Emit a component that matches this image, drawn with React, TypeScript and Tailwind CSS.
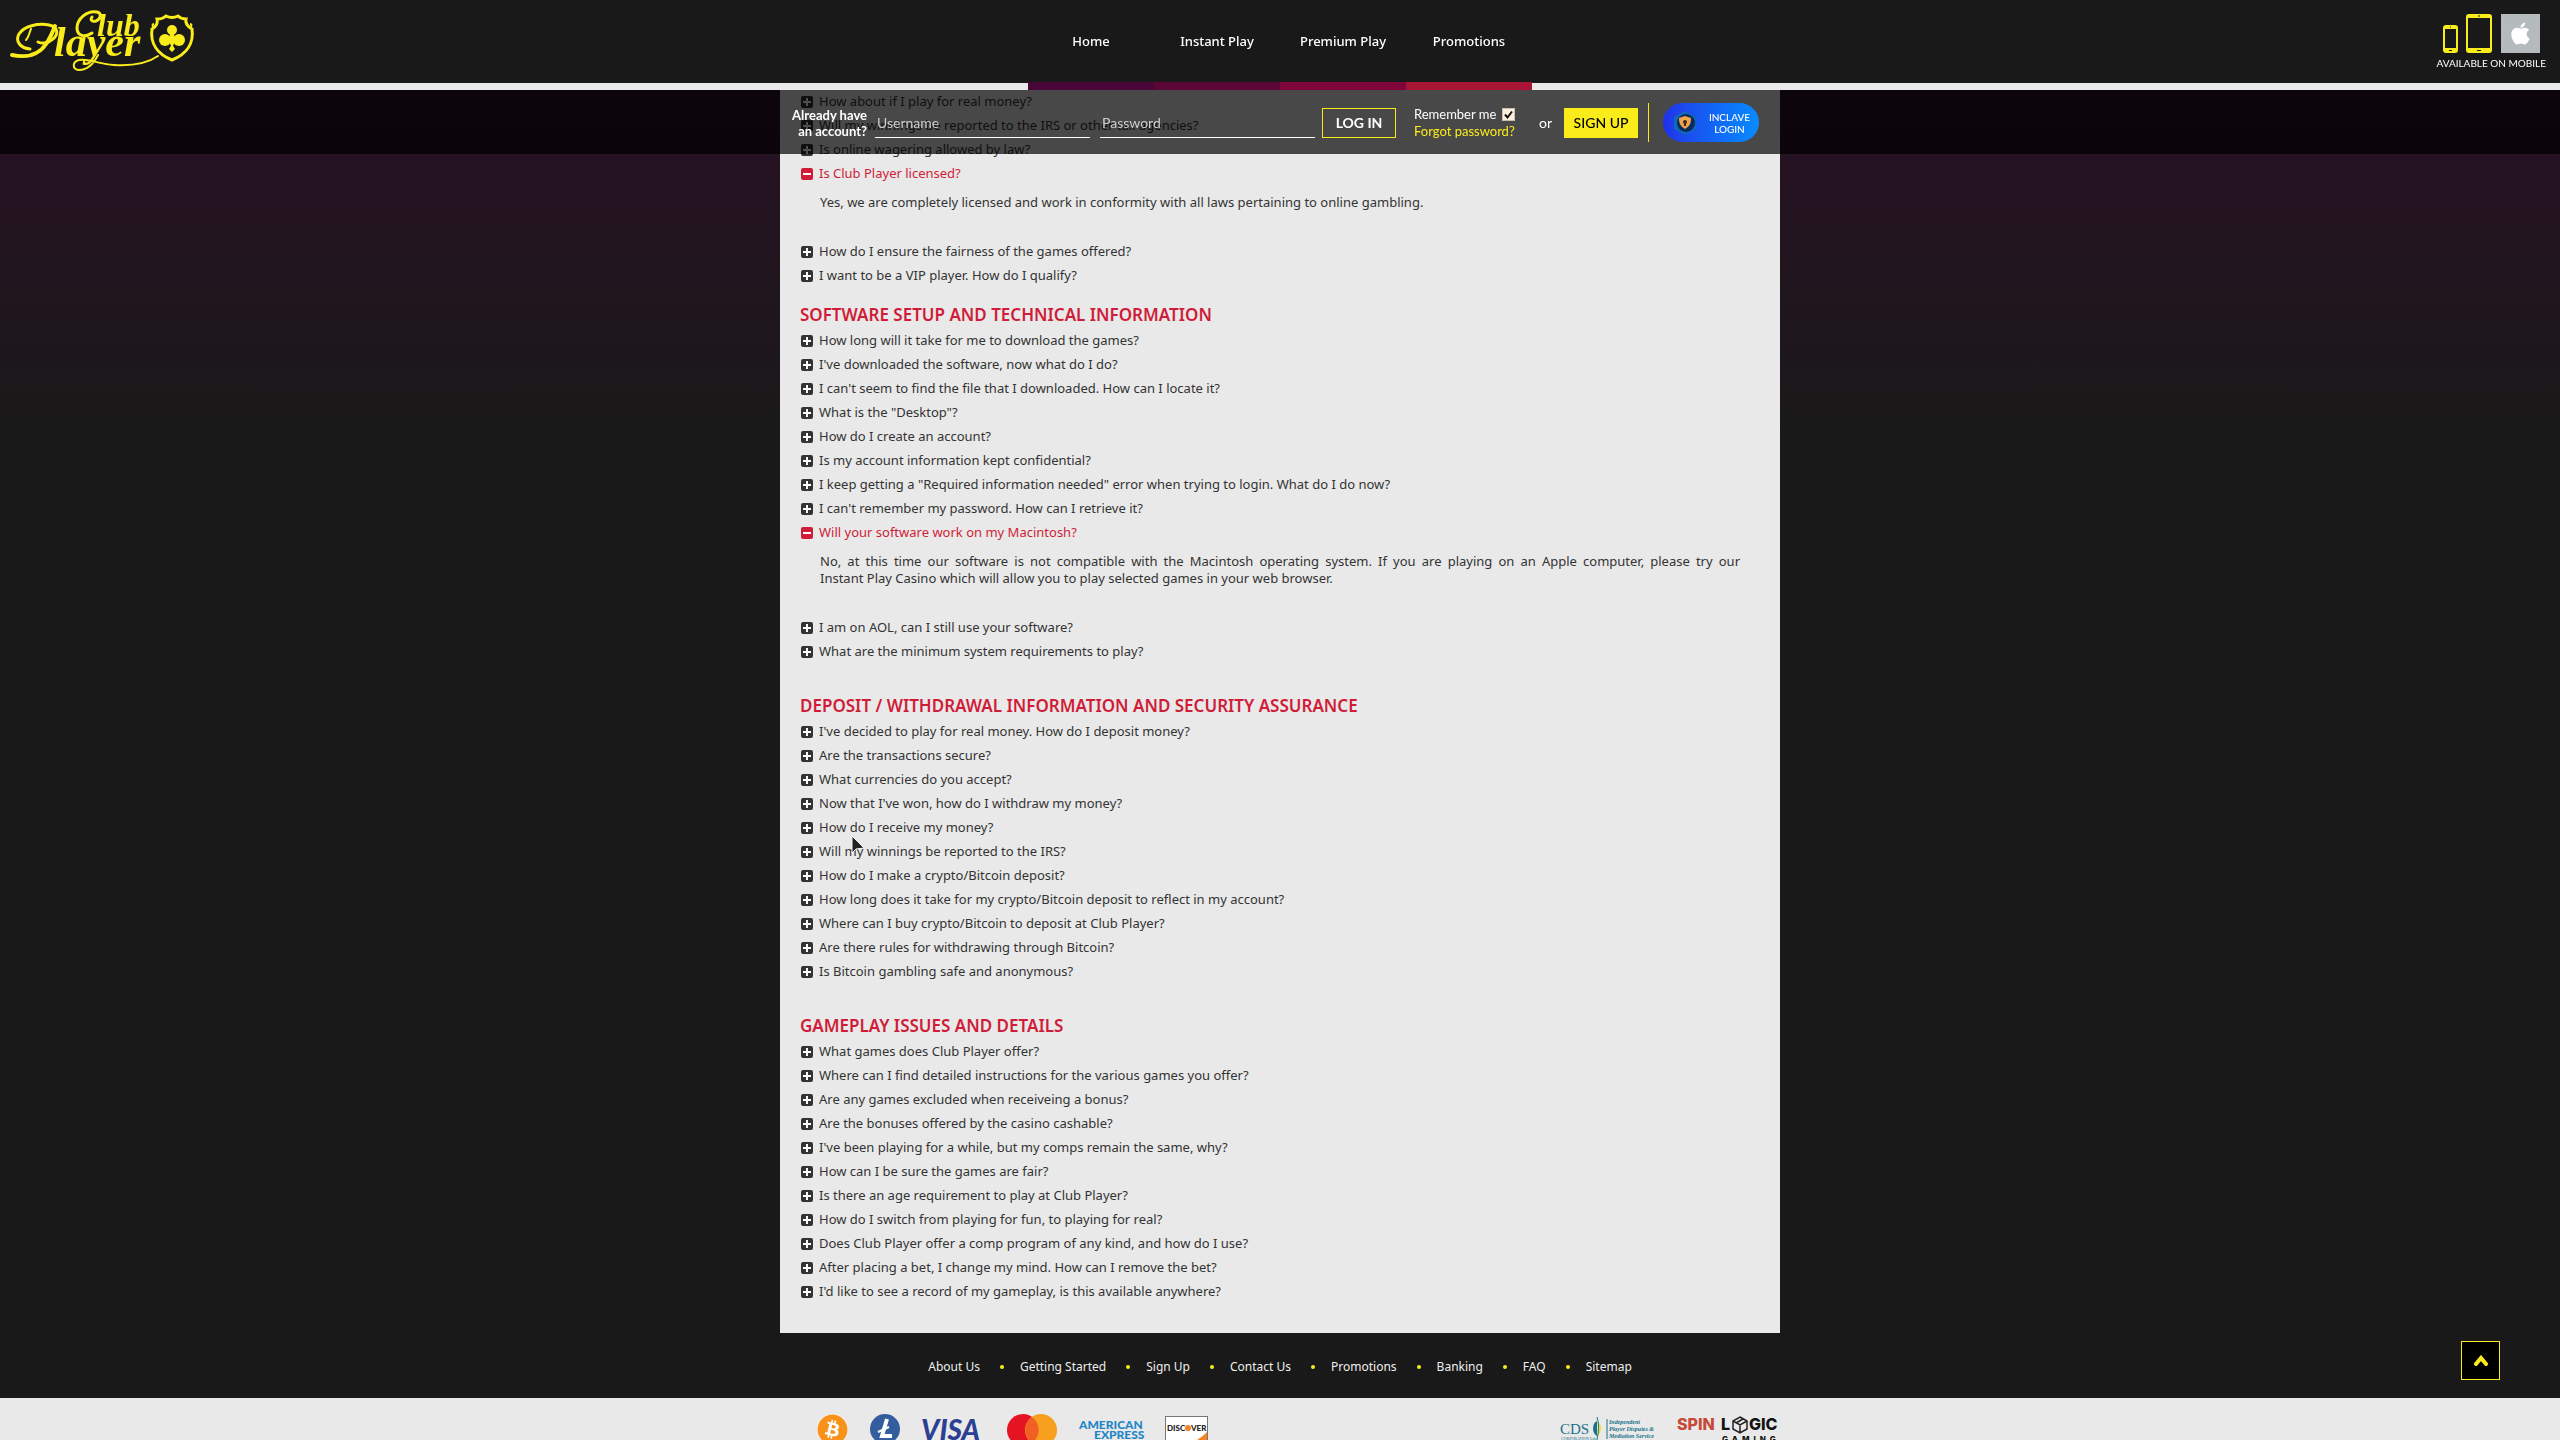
import type { ReactNode } from 'react';
import { FaApple, FaBitcoin } from 'react-icons/fa';

interface Question {
  q: string;
  a?: string;
}

interface Section {
  title?: string;
  items: Question[];
}

const NAV = [
  { label: 'Home', border: 'border-[#4b0638]' },
  { label: 'Instant Play', border: 'border-[#5c0537]' },
  { label: 'Premium Play', border: 'border-[#800538]' },
  { label: 'Promotions', border: 'border-[#a81534]' },
];

const FOOTER_LINKS = ['About Us', 'Getting Started', 'Sign Up', 'Contact Us', 'Promotions', 'Banking', 'FAQ', 'Sitemap'];

const SECTIONS: Section[] = [
  {
    items: [
      { q: 'How about if I play for real money?' },
      { q: 'Will my winnings be reported to the IRS or other tax agencies?' },
      { q: 'Is online wagering allowed by law?' },
      {
        q: 'Is Club Player licensed?',
        a: 'Yes, we are completely licensed and work in conformity with all laws pertaining to online gambling.',
      },
      { q: 'How do I ensure the fairness of the games offered?' },
      { q: 'I want to be a VIP player. How do I qualify?' },
    ],
  },
  {
    title: 'Software setup and technical information',
    items: [
      { q: 'How long will it take for me to download the games?' },
      { q: "I've downloaded the software, now what do I do?" },
      { q: "I can't seem to find the file that I downloaded. How can I locate it?" },
      { q: 'What is the "Desktop"?' },
      { q: 'How do I create an account?' },
      { q: 'Is my account information kept confidential?' },
      { q: 'I keep getting a "Required information needed" error when trying to login. What do I do now?' },
      { q: "I can't remember my password. How can I retrieve it?" },
      {
        q: 'Will your software work on my Macintosh?',
        a: 'No, at this time our software is not compatible with the Macintosh operating system. If you are playing on an Apple computer, please try our Instant\u00a0Play\u00a0Casino which will allow you to play selected games in your web browser.',
      },
      { q: 'I am on AOL, can I still use your software?' },
      { q: 'What are the minimum system requirements to play?' },
    ],
  },
  {
    title: 'Deposit / Withdrawal information and security assurance',
    items: [
      { q: "I've decided to play for real money. How do I deposit money?" },
      { q: 'Are the transactions secure?' },
      { q: 'What currencies do you accept?' },
      { q: "Now that I've won, how do I withdraw my money?" },
      { q: 'How do I receive my money?' },
      { q: 'Will my winnings be reported to the IRS?' },
      { q: 'How do I make a crypto/Bitcoin deposit?' },
      { q: 'How long does it take for my crypto/Bitcoin deposit to reflect in my account?' },
      { q: 'Where can I buy crypto/Bitcoin to deposit at Club Player?' },
      { q: 'Are there rules for withdrawing through Bitcoin?' },
      { q: 'Is Bitcoin gambling safe and anonymous?' },
    ],
  },
  {
    title: 'Gameplay issues and details',
    items: [
      { q: 'What games does Club Player offer?' },
      { q: 'Where can I find detailed instructions for the various games you offer?' },
      { q: 'Are any games excluded when receiveing a bonus?' },
      { q: 'Are the bonuses offered by the casino cashable?' },
      { q: "I've been playing for a while, but my comps remain the same, why?" },
      { q: 'How can I be sure the games are fair?' },
      { q: 'Is there an age requirement to play at Club Player?' },
      { q: 'How do I switch from playing for fun, to playing for real?' },
      { q: 'Does Club Player offer a comp program of any kind, and how do I use?' },
      { q: 'After placing a bet, I change my mind. How can I remove the bet?' },
      { q: "I'd like to see a record of my gameplay, is this available anywhere?" },
    ],
  },
];

function Logo() {
  return (
    <svg width="190" height="66" viewBox="8 8 190 66" fill="none" role="img" aria-label="Club Player">
      <g stroke="#f9ec1a" strokeLinecap="round">
        <path d="M12 55c14 3 27 0 34-11 5-7 7-13 9-18" strokeWidth="4" />
        <path d="M30 49c-10-1-15-8-11-15 5-8 19-11 30-9 9 2 10 9 4 14-4 4-11 5-15 3" strokeWidth="3" />
        <path d="M31 29c-2 4-2 8-5 11" strokeWidth="2" />
        <path d="M97 12c-10-2-20 7-20 16 0 8 8 10 15 5M97 12c5 1 4 7-1 9-4 1-6-1-4-4" strokeWidth="3" />
        <path d="M98 55c-5 10-11 15-19 15-7-1-7-8 0-10 9-2 18 4 35 5 18 1 34-2 44-9" strokeWidth="2" />
      </g>
      <g fill="#f9ec1a" className="font-['Liberation_Serif',serif] font-bold italic">
        <text x="54" y="56" fontSize="42">layer</text>
        <text x="97" y="36" fontSize="32">lub</text>
      </g>
      <path
        d="M157 19c4 0 7-1 9-3 4 2 8 2 12 0 2 2 5 3 8 3-1 4 1 7 6 10 2 14-5 25-20 31-15-6-22-17-20-31 5-3 6-6 5-10z"
        fill="#191919"
        stroke="#f9ec1a"
        strokeWidth="3"
      />
      <path d="M155 28c-3-1-3-4-1-4M189 28c3-1 3-4 1-4" stroke="#f9ec1a" strokeWidth="2" />
      <g fill="#f9ec1a">
        <circle cx="172" cy="30" r="5" />
        <circle cx="165" cy="40" r="6" />
        <circle cx="179" cy="40" r="6" />
        <path d="M170 33h4l1 8-2 5h-2l-2-5zM172 44l3 5-3 3-3-3z" />
      </g>
    </svg>
  );
}

function ToggleIcon({ open }: { open: boolean }) {
  return (
    <svg width="13" height="13" viewBox="0 0 13 13" aria-hidden="true">
      <rect x="1" y="0" width="12" height="12" rx="2" fill="currentColor" />
      <path d={open ? 'M3 6h8' : 'M3 6h8M7 2v8'} stroke="#fff" strokeWidth="2" />
    </svg>
  );
}

function FaqItem({ q, a }: Question) {
  return (
    <li>
      <button
        type="button"
        aria-expanded={Boolean(a)}
        className={`flex h-6 items-center gap-[6px] text-left ${a ? 'text-[#d01c38]' : 'text-[#333]'}`}
      >
        <ToggleIcon open={Boolean(a)} />
        {q}
      </button>
      {a && <p className="px-5 pt-2 pb-[29px] text-justify leading-[17px]">{a}</p>}
    </li>
  );
}

function MobileLinks() {
  return (
    <a href="#mobile" className="flex flex-col items-center gap-1 font-[Lato,sans-serif] text-[10px] leading-3 text-white">
      <span className="flex items-end gap-2">
        <svg width="50" height="39" viewBox="0 0 50 39" aria-hidden="true">
          <rect width="15" height="28" y="11" rx="3" fill="#f9ec1a" />
          <rect x="2" y="15" width="11" height="19" fill="#191919" />
          <rect x="23" width="26" height="39" rx="3" fill="#f9ec1a" />
          <rect x="25" y="4" width="22" height="30" fill="#191919" />
          <path d="M6 36.500h3M34 36.500h4M35 2h2M7 13h1" stroke="#191919" />
        </svg>
        <span className="flex size-[39px] items-center justify-center bg-[#b5babd]">
          <FaApple size={25} />
        </span>
      </span>
      AVAILABLE ON MOBILE
    </a>
  );
}

function LoginBar() {
  return (
    <div className="fixed inset-x-0 top-[90px] z-10 bg-black/69 font-[Lato,sans-serif] text-sm text-white">
      <form className="mx-auto flex h-16 w-full max-w-[1000px] items-center pt-px" onSubmit={(e) => e.preventDefault()}>
        <p className="w-[87px] text-right text-[13px] leading-4 font-bold">
          Already have
          <br />
          an account?
        </p>
        <input
          type="text"
          aria-label="Username"
          placeholder="Username"
          className="ml-2 h-[30px] w-[215px] border-b border-white px-[2px] outline-none placeholder:text-[#ccc]"
        />
        <input
          type="password"
          aria-label="Password"
          placeholder="Password"
          className="ml-[10px] h-[30px] w-[215px] border-b border-white px-[2px] outline-none placeholder:text-[#ccc]"
        />
        <button type="submit" className="ml-[7px] h-[30px] w-[74px] border border-[#f9ec1a] font-bold">
          LOG IN
        </button>
        <div className="ml-[18px] w-[101px] text-[13px] leading-[17px] whitespace-nowrap">
          <label className="flex items-center justify-between">
            Remember me
            <span className="relative size-[13px]">
              <input type="checkbox" defaultChecked className="peer block size-[13px] appearance-none border border-[#c9bfae] bg-[#fdf0da]" />
              <svg viewBox="0 0 13 13" className="pointer-events-none absolute inset-0 hidden peer-checked:block" aria-hidden="true">
                <path d="M3 6.500l2.500 3L10 3.500" fill="none" stroke="#111" strokeWidth="2" />
              </svg>
            </span>
          </label>
          <a href="#forgot" className="text-[#f9ec1a]">
            Forgot password?
          </a>
        </div>
        <span className="ml-6">or</span>
        <a href="#signup" className="ml-3 flex h-[30px] w-[74px] items-center justify-center bg-[#f9ec1a] font-medium text-black">
          SIGN UP
        </a>
        <a href="#inclave" className="ml-[10px] flex border-l border-[#f9ec1a] pl-[14px]">
          <span className="flex h-[39px] w-24 items-center justify-between rounded-full bg-linear-to-r from-[#2130e8] to-[#0a8bff] pr-[9px] pl-[10px]">
            <svg width="24" height="24" viewBox="0 0 24 24" aria-hidden="true">
              <path d="M12 0l11 6v12l-11 6L1 18V6z" fill="#1268b8" />
              <circle cx="13" cy="12" r="9" fill="#0b2b5e" />
              <path d="M12 5l6 2c0 5-1 8-6 11-5-3-6-6-6-11z" fill="#f0a34a" />
              <circle cx="12" cy="11" r="2" fill="#3b2a2c" />
              <path d="M12 12v3" stroke="#3b2a2c" strokeWidth="2" />
            </svg>
            <span className="text-center text-[10px] leading-3 font-medium">
              INCLAVE
              <br />
              LOGIN
            </span>
          </span>
        </a>
      </form>
    </div>
  );
}

function PaymentLogos() {
  return (
    <div className="flex gap-5">
      <span className="mt-[6px] size-[31px] rounded-full bg-white text-[#f7931a]">
        <FaBitcoin size={31} />
      </span>
      <svg width="344" height="40" viewBox="868 1408 344 40" role="img" aria-label="Litecoin, Visa, Mastercard, American Express, Discover">
        <circle cx="885" cy="1429" r="15" fill="#345d9d" />
        <path d="M887 1419l-5 17h10" fill="none" stroke="#fff" strokeWidth="4" />
        <path d="M878 1432l11-5" stroke="#fff" strokeWidth="2" />
        <text x="921" y="1440" fontSize="28" className="font-[Lato,sans-serif] font-black italic" fill="#2b3f93">VISA</text>
        <circle cx="1023" cy="1430" r="16" fill="#e51423" />
        <circle cx="1041" cy="1430" r="16" fill="#f79f1f" />
        <path d="M1032 1417a16 16 0 0 1 0 26a16 16 0 0 1 0-26" fill="#f16022" />
        <g className="font-[Lato,sans-serif] font-black" fill="#1f86c8" fontSize="12">
          <text x="1079" y="1429">AMERICAN</text>
          <text x="1094" y="1439">EXPRESS</text>
        </g>
        <rect x="1165.500" y="1416.500" width="42" height="30" fill="#fff" stroke="#777" />
        <path d="M1176 1447q20-3 31-15v15z" fill="#f58220" />
        <g className="font-[Lato,sans-serif] font-black" fill="#222" fontSize="8">
          <text x="1167" y="1431">DISC</text>
          <text x="1191" y="1431">VER</text>
        </g>
        <circle cx="1188" cy="1428" r="3" fill="#f58220" />
      </svg>
    </div>
  );
}

function PartnerLogos() {
  return (
    <svg width="222" height="40" viewBox="1558 1408 222 40" role="img" aria-label="CDS and SpinLogic Gaming">
      <g className="font-['Liberation_Serif',serif]" fill="#16738a">
        <text x="1560" y="1434" fontSize="15">CDS</text>
        <text x="1561" y="1440" fontSize="4">CORPORATION Ltd.</text>
      </g>
      <path d="M1597 1421a6 8 0 0 0 0 15z" fill="#16738a" />
      <path d="M1597 1421a6 8 0 0 1 0 15q4-7 0-15z" fill="#f4d728" />
      <path d="M1597 1417q3 9 0 23M1607 1419v20" fill="none" stroke="#16738a" />
      <g className="font-['Liberation_Serif',serif] font-bold italic" fill="#16738a" fontSize="6">
        <text x="1609" y="1424">Independent</text>
        <text x="1609" y="1431">Player Disputes &amp;</text>
        <text x="1609" y="1438">Mediation Service</text>
      </g>
      <g className="font-[Inter,sans-serif] font-extrabold" fontSize="16">
        <text x="1677" y="1430" fill="#c64a38">SPIN</text>
        <text x="1721" y="1430" fill="#111">L</text>
        <text x="1749" y="1430" fill="#111">GIC</text>
        <text x="1722" y="1442" fill="#111" fontSize="8" letterSpacing="4">GAMING</text>
      </g>
      <path d="M1740 1417l7 4v8l-7 4-7-4v-8zM1733 1421l7 4 7-4M1740 1425v8M1736 1423l7-4" fill="none" stroke="#222" strokeWidth="1.500" />
    </svg>
  );
}

function Shell({ children }: { children: ReactNode }) {
  return (
    <div className="flex h-screen flex-col overflow-hidden bg-[#191919] bg-linear-to-b from-[#281024] from-[90px] to-[#191919] to-[440px] pt-[90px] font-['Noto_Sans',sans-serif] text-[13px] text-[#333]">
      {children}
    </div>
  );
}

export default function App() {
  return (
    <Shell>
      <header className="fixed inset-x-0 top-0 z-20 grid h-[90px] grid-cols-[1fr_504px_1fr] border-b-[7px] border-[#e9e9e9] bg-[#191919]">
        <a href="#home" className="pt-2 pl-2">
          <Logo />
        </a>
        <nav className="-mb-[7px] grid grid-cols-4 text-center font-medium text-white">
          {NAV.map((item) => (
            <a key={item.label} href="#nav" className={`flex items-center justify-center border-b-8 pt-px ${item.border}`}>
              {item.label}
            </a>
          ))}
        </nav>
        <div className="flex justify-end pt-[14px] pr-[14px]">
          <MobileLinks />
        </div>
      </header>
      <LoginBar />

      <main className="mx-auto w-full max-w-[1000px] shrink-0 bg-[#e9e9e9] px-5 pb-[14px]">
        {SECTIONS.map((section, i) => (
          <section key={i} className={i === 0 ? '' : 'pt-[15px]'}>
            {section.title && (
              <h2 className="mb-[2px] text-[17px] leading-6 font-semibold text-[#d01c38] uppercase">{section.title}</h2>
            )}
            <ul className={i === 0 ? '' : 'pb-[15px]'}>
              {section.items.map((item) => (
                <FaqItem key={item.q} {...item} />
              ))}
            </ul>
          </section>
        ))}
      </main>

      <footer className="shrink-0">
        <nav className="bg-[#191919] text-[12px] text-[#eee]">
          <ul className="flex h-[65px] items-center justify-center gap-4 pt-[2px]">
            {FOOTER_LINKS.map((label, i) => (
              <li key={label} className="flex items-center gap-5">
                <a href="#footer">{label}</a>
                {i < FOOTER_LINKS.length - 1 && <span className="size-1 rounded-full bg-[#f9ec1a]" />}
              </li>
            ))}
          </ul>
        </nav>
        <div className="bg-[#e9e9e9]">
          <div className="mx-auto flex w-full max-w-[1000px] justify-between pt-[10px] pl-[37px]">
            <PaymentLogos />
            <PartnerLogos />
          </div>
        </div>
      </footer>

      <button
        type="button"
        aria-label="Back to top"
        className="fixed right-[60px] bottom-[60px] flex size-[39px] items-center justify-center border border-[#f9ec1a] bg-black"
      >
        <svg width="16" height="12" viewBox="0 0 16 12" fill="none" stroke="#f9ec1a" strokeWidth="4" strokeLinecap="round">
          <path d="M3 9l5-6 5 6" />
        </svg>
      </button>
      <svg width="14" height="20" viewBox="0 0 14 20" className="pointer-events-none fixed top-[835px] left-[851px]" aria-hidden="true">
        <path d="M1 1v17l4-4 8-1z" fill="#222" stroke="#f5f5f5" strokeWidth="1" />
      </svg>
    </Shell>
  );
}
